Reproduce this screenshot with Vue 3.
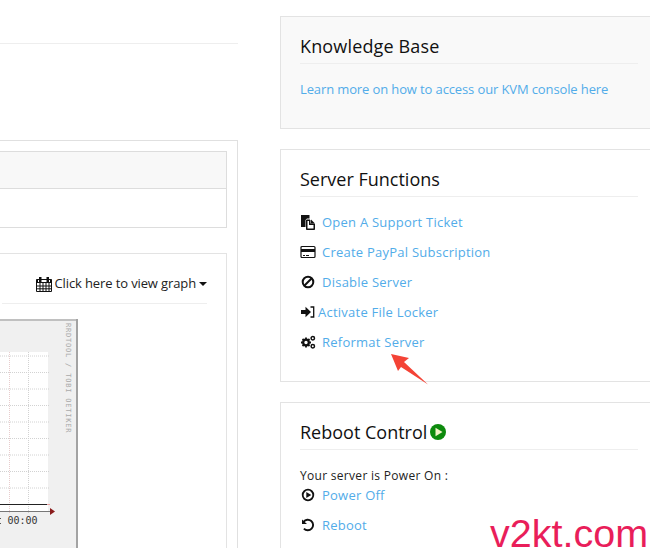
<script setup>
const links = [
  { id: 'ticket', label: 'Open A Support Ticket' },
  { id: 'card', label: 'Create PayPal Subscription' },
  { id: 'ban', label: 'Disable Server' },
  { id: 'signin', label: 'Activate File Locker', tight: true },
  { id: 'cogs', label: 'Reformat Server' }
]
const gridY = [356, 372.5, 389, 405.5, 422, 438.5, 455, 471.5, 488]
</script>

<template>
  <div class="page">
    <div class="left">
      <div class="top-rule"></div>
      <div class="outer">
        <div class="table">
          <div class="table-head"></div>
          <div class="table-body"></div>
        </div>
        <div class="graph-panel">
          <div class="graph-head">
            <svg class="cal" viewBox="0 0 16 16" width="16" height="16">
              <path fill="none" stroke="#111" stroke-width="1" d="M.5 3.500h15v12h-15zM.5 10h15M.5 12.800h15M4 7v8.500M7 7v8.500M10 7v8.500M13 7v8.500"/>
              <path fill="#111" d="M.5 3.500h15V7H.5z"/>
              <path fill="#111" d="M3 1h2.500v3.500H3zM10.500 1H13v3.500h-2.500z"/>
              <path fill="#fff" d="M2 4h1v2H2zM5.500 4h5v2h-5zM13 4h1v2h-1z"/>
            </svg>
            <span class="graph-link">Click here to view graph</span>
            <span class="caret"></span>
          </div>
          <div class="graph-wrap">
            <svg class="graph" viewBox="0 319 78 229" width="78" height="229">
              <rect x="0" y="319" width="78" height="229" fill="#f0f0f0"/>
              <rect x="0" y="319" width="78" height="2" fill="#c0c0c0"/>
              <rect x="76" y="319" width="2" height="229" fill="#a3a3a3"/>
              <rect x="0" y="352" width="48" height="159" fill="#fff"/>
              <line v-for="y in gridY" :key="y" x1="0" x2="50" :y1="y" :y2="y" stroke="#d2d2d2" stroke-dasharray="1 1"/>
              <line x1="9.500" x2="9.500" y1="352" y2="514" stroke="#e8cccc" stroke-dasharray="1 1"/>
              <line x1="28.500" x2="28.500" y1="352" y2="514" stroke="#d2d2d2" stroke-dasharray="1 1"/>
              <line x1="0" x2="47" y1="504.500" y2="504.500" stroke="#222"/>
              <line x1="47" x2="50" y1="504.500" y2="504.500" stroke="#e8a0a0"/>
              <line x1="0" x2="51" y1="511.500" y2="511.500" stroke="#777"/>
              <path d="M50 508l5 3.500-5 3.500z" fill="#8a1c1c"/>
              <rect x="0" y="518" width="1" height="1" fill="#555"/>
              <rect x="0" y="523" width="1" height="1" fill="#555"/>
              <text class="g-time" x="7.500" y="524">00:00</text>
              <text class="g-side" transform="translate(66 323) rotate(90)">RRDTOOL / TOBI OETIKER</text>
            </svg>
          </div>
        </div>
      </div>
    </div>

    <div class="right">
      <section class="panel shaded kb">
        <h3>Knowledge Base</h3>
        <a class="link">Learn more on how to access our KVM console here</a>
      </section>

      <section class="panel functions">
        <h3>Server Functions</h3>
        <ul class="list">
          <li v-for="l in links" :key="l.id">
            <span class="ico" :class="{ tight: l.tight }">
              <svg v-if="l.id === 'ticket'" viewBox="0 0 16 16" width="16" height="16">
                <path fill="#111" d="M1 1h8.500v3.500H7L5.500 6v7H1z"/>
                <path fill="#111" stroke="#111" d="M6.500 6H10v4h4.500v5.500h-8z"/>
                <path fill="#fff" d="M7.500 7H9v4h4.500v3.500h-6z"/>
                <path fill="#111" d="M11 5.500l4 4h-4z"/>
              </svg>
              <svg v-else-if="l.id === 'card'" viewBox="0 0 16 16" width="16" height="16">
                <rect x="1" y="2.500" width="14" height="11" rx="1" fill="none" stroke="#111" stroke-width="1.200"/>
                <path fill="#111" d="M1 5h14v3H1zM3 11h2v1H3zM6 11h3v1H6z"/>
              </svg>
              <svg v-else-if="l.id === 'ban'" viewBox="0 0 16 16" width="16" height="16">
                <circle cx="8" cy="8" r="5.300" fill="none" stroke="#111" stroke-width="2"/>
                <path stroke="#111" stroke-width="2" d="M4.500 11.500l7-7"/>
              </svg>
              <svg v-else-if="l.id === 'signin'" viewBox="0 0 16 16" width="16" height="16">
                <path fill="#111" d="M1 6h4.500V2.800L11 8l-5.500 5.200V10H1z"/>
                <path fill="none" stroke="#111" stroke-width="1.300" d="M10.500 3h3.200v10h-3.200"/>
              </svg>
              <svg v-else viewBox="0 0 16 16" width="16" height="16">
                <g fill="none" stroke="#111">
                  <circle cx="6" cy="8.500" r="2.800" stroke-width="2.200"/>
                  <path stroke-width="1.800" d="M6 3.500v1.800M6 11.700v1.800M1 8.500h1.800M9.200 8.500h1.800M2.500 5l1.200 1.200M8.300 10.800l1.200 1.200M2.500 12l1.200-1.200M8.300 6.200l1.200-1.200"/>
                  <circle cx="12.800" cy="4.200" r="1.700" stroke-width="1.500"/>
                  <circle cx="12.800" cy="12.300" r="1.700" stroke-width="1.500"/>
                </g>
              </svg>
            </span>
            <a class="link">{{ l.label }}</a>
          </li>
        </ul>
      </section>

      <section class="panel reboot">
        <h3>Reboot Control
          <svg class="status" viewBox="0 0 16 16" width="16" height="16">
            <circle cx="8" cy="8" r="8" fill="#0d8a0d"/>
            <path fill="#f2f2c8" d="M5.500 3.800l7 4.200-7 4.200z"/>
          </svg>
        </h3>
        <p class="state">Your server is Power On :</p>
        <div class="power">
          <span class="ico">
            <svg viewBox="0 0 16 16" width="16" height="16">
              <circle cx="8" cy="8" r="5.300" fill="none" stroke="#111" stroke-width="1.800"/>
              <path fill="#111" d="M6.300 5l5 3-5 3z"/>
            </svg>
          </span>
          <a class="link">Power Off</a>
        </div>
        <div class="power second">
          <span class="ico">
            <svg viewBox="0 0 16 16" width="16" height="16">
              <path fill="none" stroke="#111" stroke-width="1.900" d="M3.600 4.800A5.300 5.300 0 1 1 3.900 11.600"/>
              <path fill="#111" d="M2 2.500l5 4.500H2z"/>
            </svg>
          </span>
          <a class="link">Reboot</a>
        </div>
      </section>
    </div>

    <svg class="arrow" viewBox="0 0 50 40" width="50" height="40">
      <path fill="#f44336" d="M11 4l18 4-5 4 24 22.500L21 17l-3 4z"/>
    </svg>
    <div class="mark">v2kt.com</div>
  </div>
</template>

<style>
html, body { margin: 0; padding: 0; background: #fff; }
</style>

<style scoped>
.page {
  position: relative;
  width: 650px;
  height: 548px;
  overflow: hidden;
  display: flex;
  gap: 42px;
  font-family: "Open Sans", sans-serif;
  color: #111;
  background: #fff;
}
.left { width: 238px; flex: none; }
.top-rule { height: 43px; border-bottom: 1px solid #eee; }
.outer {
  margin: 96px 0 0 -20px;
  border: 1px solid #e0e0e0;
  border-bottom: 0;
  padding: 10px 10px 0 0;
  height: 420px;
  box-sizing: border-box;
  width: 258px;
}
.table { border: 1px solid #ddd; }
.table-head { height: 36px; background: #f8f8f8; border-bottom: 1px solid #ddd; }
.table-body { height: 38px; }
.graph-panel {
  margin-top: 25px;
  border: 1px solid #e3e3e3;
  border-bottom: 0;
  padding: 0 19px 0 20px;
  height: 300px;
}
.graph-head {
  height: 49px;
  border-bottom: 1px solid #eee;
  display: flex;
  align-items: flex-end;
  justify-content: flex-end;
  font-size: 13px;
  line-height: 20px;
  color: #222;
}
.graph-link { letter-spacing: -.12px; margin-bottom: 10px; }
.cal { margin: 0 3px 11px 0; }
.caret {
  margin: 0 0 17px 3px;
  border-left: 4px solid transparent;
  border-right: 4px solid transparent;
  border-top: 4px solid #111;
}
.graph-wrap { margin-top: 15px; }
.graph { display: block; margin-left: -2px; }
.g-time { font: 10px "DejaVu Sans Mono", monospace; fill: #333; }
.g-side { font: 7px "DejaVu Sans Mono", monospace; fill: #aaa; letter-spacing: .8px; }

.right { width: 378px; flex: none; padding-top: 16px; }
.panel {
  border: 1px solid #e3e3e3;
  padding: 0 19px;
  box-sizing: border-box;
}
.shaded { background: #f9f9f9; }
.kb { height: 113px; margin-bottom: 20px; }
.functions { height: 233px; margin-bottom: 20px; }
.reboot { height: 200px; }
h3 {
  margin: 0;
  height: 47px;
  box-sizing: border-box;
  border-bottom: 1px solid #eee;
  padding-top: 17px;
  font-size: 18px;
  font-weight: 400;
  line-height: 24px;
  color: #111;
  display: flex;
  align-items: flex-start;
  gap: 3px;
}
.kb h3 { letter-spacing: .15px; }
.status { flex: none; margin-top: 4px; }
.link { color: #52ace9; font-size: 13px; line-height: 18px; letter-spacing: .24px; }
.kb .link { display: block; margin-top: 16px; letter-spacing: -.12px; }
.list { list-style: none; margin: 10px 0 0; padding: 0; }
.list li { height: 30px; display: flex; align-items: center; }
.ico { width: 22px; flex: none; display: flex; }
.ico.tight { width: 18px; }
.state { margin: 17px 0 0; font-size: 12px; line-height: 18px; color: #222; letter-spacing: .3px; }
.power { display: flex; align-items: center; height: 20px; margin-top: 0; }
.power.second { margin-top: 10px; }
.arrow { position: absolute; left: 380px; top: 350px; }
.mark {
  position: absolute;
  left: 490px;
  top: 518px;
  font: 39.500px/30px "Liberation Sans", sans-serif;
  color: #e91e5a;
}
</style>
